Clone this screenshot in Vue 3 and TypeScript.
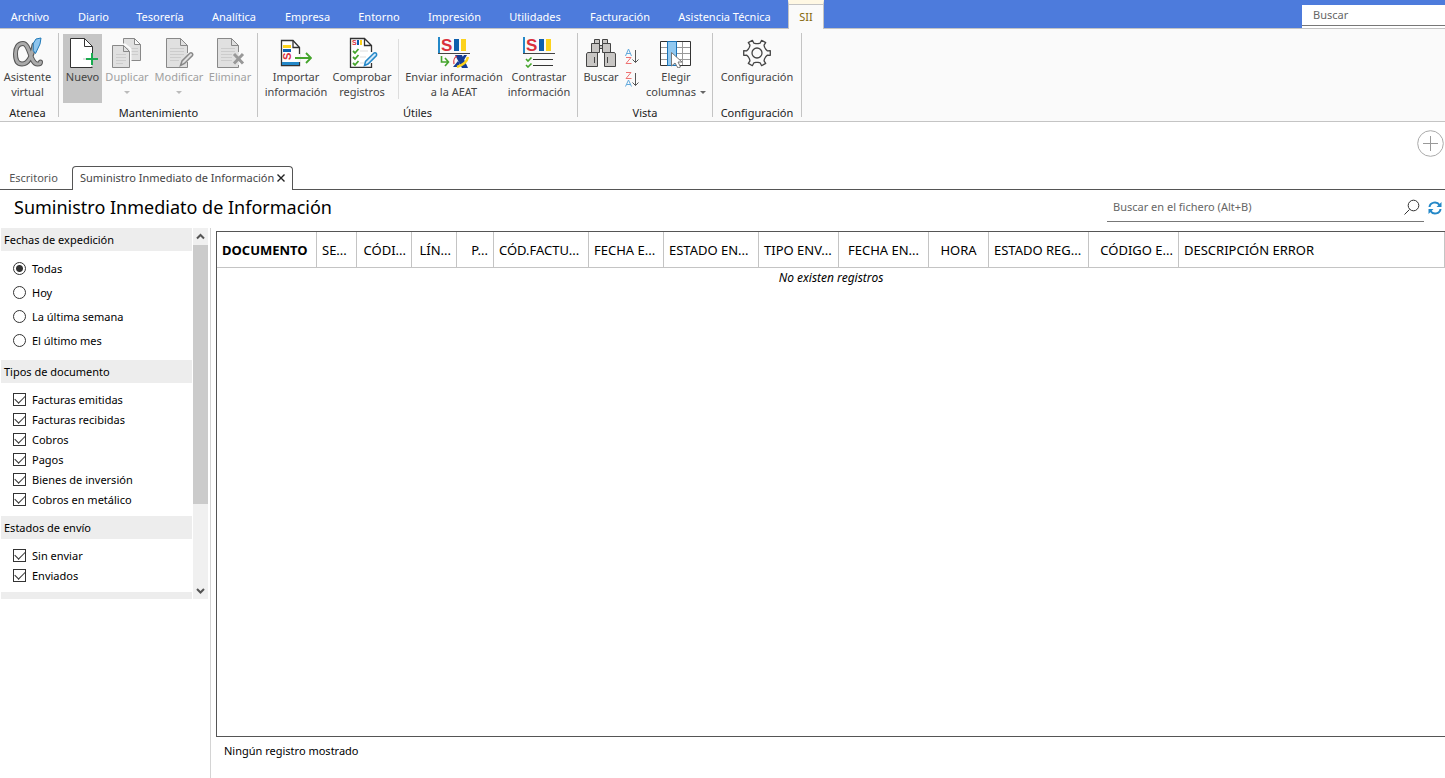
<script setup lang="ts">
import { ref } from 'vue'

interface MenuTab { label: string; width: number }
interface RibbonButton {
  icon: string
  lines: string[]
  width: number
  state?: 'active' | 'disabled'
  arrow?: 'below' | 'inline'
}
interface RibbonGroup { caption: string; left: number; right: number; buttons: RibbonButton[] }
interface Column { label: string; width?: number; align: 'left' | 'center' | 'right' }

const menuTabs: MenuTab[] = [
  { label: 'Archivo', width: 60 },
  { label: 'Diario', width: 67 },
  { label: 'Tesorería', width: 66 },
  { label: 'Analítica', width: 82 },
  { label: 'Empresa', width: 65 },
  { label: 'Entorno', width: 78 },
  { label: 'Impresión', width: 73 },
  { label: 'Utilidades', width: 88 },
  { label: 'Facturación', width: 82 },
  { label: 'Asistencia Técnica', width: 127 },
]

const groups: RibbonGroup[] = [
  {
    caption: 'Atenea', left: 0, right: 4,
    buttons: [{ icon: 'alpha', lines: ['Asistente', 'virtual'], width: 55 }],
  },
  {
    caption: 'Mantenimiento', left: 4, right: 4,
    buttons: [
      { icon: 'new', lines: ['Nuevo'], width: 39, state: 'active' },
      { icon: 'copy', lines: ['Duplicar'], width: 50, state: 'disabled', arrow: 'below' },
      { icon: 'edit', lines: ['Modificar'], width: 54, state: 'disabled', arrow: 'below' },
      { icon: 'remove', lines: ['Eliminar'], width: 48, state: 'disabled' },
    ],
  },
  {
    caption: 'Útiles', left: 5, right: 6,
    buttons: [
      { icon: 'import', lines: ['Importar', 'información'], width: 66 },
      { icon: 'check', lines: ['Comprobar', 'registros'], width: 66 },
      { icon: 'separator', lines: [], width: 7 },
      { icon: 'send', lines: ['Enviar información', 'a la AEAT'], width: 104 },
      { icon: 'contrast', lines: ['Contrastar', 'información'], width: 66 },
    ],
  },
  {
    caption: 'Vista', left: 4, right: 5,
    buttons: [
      { icon: 'find', lines: ['Buscar'], width: 38 },
      { icon: 'sort', lines: [], width: 24 },
      { icon: 'columns', lines: ['Elegir', 'columnas'], width: 64, arrow: 'inline' },
    ],
  },
  {
    caption: 'Configuración', left: 4, right: 5,
    buttons: [{ icon: 'gear', lines: ['Configuración'], width: 80 }],
  },
]

const gearPath = (() => {
  const points: string[] = []
  for (let tooth = 0; tooth < 6; tooth++) {
    const spec = [[-23, 9.5], [-12, 10.5], [-10, 13.5], [10, 13.5], [12, 10.5], [23, 9.5]]
    for (const [offset, radius] of spec) {
      const angle = ((tooth * 60 + offset) * Math.PI) / 180
      points.push(`${(16 + radius * Math.cos(angle)).toFixed(2)} ${(17 + radius * Math.sin(angle)).toFixed(2)}`)
    }
  }
  return `M${points.join('L')}Z`
})()

const periods = ['Todas', 'Hoy', 'La última semana', 'El último mes']
const period = ref('Todas')
const documentTypes = ['Facturas emitidas', 'Facturas recibidas', 'Cobros', 'Pagos', 'Bienes de inversión', 'Cobros en metálico']
const selectedTypes = ref([...documentTypes])
const sendStates = ['Sin enviar', 'Enviados']
const selectedStates = ref([...sendStates])

const columns: Column[] = [
  { label: 'DOCUMENTO', width: 100, align: 'left' },
  { label: 'SE...', width: 40, align: 'left' },
  { label: 'CÓDI...', width: 55, align: 'right' },
  { label: 'LÍN...', width: 45, align: 'right' },
  { label: 'P...', width: 37, align: 'right' },
  { label: 'CÓD.FACTU...', width: 95, align: 'left' },
  { label: 'FECHA E...', width: 75, align: 'left' },
  { label: 'ESTADO EN...', width: 95, align: 'left' },
  { label: 'TIPO ENV...', width: 80, align: 'left' },
  { label: 'FECHA EN...', width: 90, align: 'center' },
  { label: 'HORA', width: 60, align: 'center' },
  { label: 'ESTADO REG...', width: 100, align: 'left' },
  { label: 'CÓDIGO E...', width: 90, align: 'right' },
  { label: 'DESCRIPCIÓN ERROR', align: 'left' },
]
</script>

<template>
  <div class="app">
    <header>
      <nav class="menu">
        <button v-for="t in menuTabs" :key="t.label" type="button" class="menu-tab" :style="{ width: t.width + 'px' }">{{ t.label }}</button>
        <button type="button" class="menu-tab current">SII</button>
        <input class="menu-search" type="text" placeholder="Buscar" aria-label="Buscar" />
      </nav>

      <div class="ribbon">
        <section v-for="g in groups" :key="g.caption" class="group" :style="{ paddingLeft: g.left + 'px', paddingRight: g.right + 'px' }">
          <div class="group-buttons">
            <template v-for="b in g.buttons" :key="b.icon">
              <span v-if="b.icon === 'separator'" class="separator"></span>
              <div v-else-if="b.icon === 'sort'" class="sorts" :style="{ width: b.width + 'px' }">
                <button type="button" class="sort" aria-label="Orden ascendente">
                  <svg width="16" height="18" viewBox="0 0 16 18">
                    <path d="M1.500 8L4.500 1L7.500 8M2.500 5.500H6.500" fill="none" stroke="#62a9dc" />
                    <path d="M2 9.500H7L2 15.500H7.500" fill="none" stroke="#ee7272" />
                    <path d="M11.500 2V14.500M8.500 11.500L11.500 14.500L14.500 11.500" fill="none" stroke="#555" />
                  </svg>
                </button>
                <button type="button" class="sort" aria-label="Orden descendente">
                  <svg width="16" height="18" viewBox="0 0 16 18">
                    <path d="M2 1.500H7L2 7.500H7.500" fill="none" stroke="#ee7272" />
                    <path d="M1.500 15.500L4.500 9L7.500 15.500M2.500 13.500H6.500" fill="none" stroke="#62a9dc" />
                    <path d="M11.500 2V14.500M8.500 11.500L11.500 14.500L14.500 11.500" fill="none" stroke="#555" />
                  </svg>
                </button>
              </div>
              <button v-else type="button" class="tool" :class="b.state" :disabled="b.state === 'disabled'" :style="{ width: b.width + 'px' }">
                <svg v-if="b.icon === 'alpha'" width="32" height="32" viewBox="0 0 32 32" fill="none" stroke-linecap="round">
                  <path d="M22 9C20 20 17 28 10 28C5 28 3.500 23 3.500 18C3.500 12 6 7.500 11 7.500C18 7.500 18 28 25.500 28C27.500 28 28.500 27 28.500 26" stroke="#555" stroke-width="5" />
                  <path d="M22 9C20 20 17 28 10 28C5 28 3.500 23 3.500 18C3.500 12 6 7.500 11 7.500C18 7.500 18 28 25.500 28C27.500 28 28.500 27 28.500 26" stroke="#aaa" stroke-width="3" />
                  <path d="M21.500 7L24 3L29 2L28 8L23.500 17.500L21.500 15Z" fill="#8ec5ee" stroke="#1f79b8" />
                </svg>
                <svg v-else-if="b.icon === 'new'" width="32" height="32" viewBox="0 0 32 32" fill="none">
                  <path d="M20 31.500H3.500V2.500H17.500L25.500 10.500V19V31.500Z" fill="#fff" />
                  <path d="M25.500 16V32M16 23H31M24.500 30V32" stroke="#c5c5c5" stroke-width="1" />
                  <path d="M25.500 31.500H3.500V2.500H17.500L25.500 10.500V17M17.500 2.500V10.500H25.500" stroke="#333" />
                  <path d="M19 23H31M25 17V29" stroke="#1aab50" stroke-width="2" />
                </svg>
                <svg v-else-if="b.icon === 'copy'" width="32" height="32" viewBox="0 0 32 32" fill="#e0e0e0" stroke="#888">
                  <path d="M12.500 2.500H23.500L29.500 8.500V24.500H12.500ZM23.500 2.500V8.500H29.500" />
                  <path d="M16 12.500H27M16 15.500H27M16 18.500H27" stroke="#ccc" />
                  <path d="M0.500 8.500H14L19.500 13V32" stroke="#fafafa" stroke-width="2" fill="none" />
                  <path d="M1.500 9.500H12.500L18.500 15.500V31.500H1.500ZM12.500 9.500V15.500H18.500" />
                  <path d="M5 18.500H15M5 21.500H15M5 24.500H15M5 27.500H12" stroke="#ccc" />
                </svg>
                <svg v-else-if="b.icon === 'edit'" width="32" height="32" viewBox="0 0 32 32" fill="#e0e0e0" stroke="#888">
                  <path d="M3.500 31.500V2.500H17.500L24.500 9.500V31.500Z" stroke="none" />
                  <path d="M24.500 17V9.500L17.500 2.500H3.500V31.500H24.500V26M17.500 2.500V9.500H24.500" />
                  <path d="M7 12.500H21M7 15.500H21M7 18.500H21M7 21.500H18M7 24.500H16" stroke="#ccc" />
                  <path d="M17.500 29.500L19 25L27 17C28.500 16 30.500 18 29.500 19.500L21.500 27.500Z" stroke="#888" stroke-width="1.500" />
                </svg>
                <svg v-else-if="b.icon === 'remove'" width="32" height="32" viewBox="0 0 32 32" fill="#e0e0e0" stroke="#888">
                  <path d="M3.500 31.500V2.500H17.500L24.500 9.500V31.500Z" stroke="none" />
                  <path d="M24.500 16V9.500L17.500 2.500H3.500V31.500H24.500V29M17.500 2.500V9.500H24.500" />
                  <path d="M7 12.500H21M7 15.500H21M7 18.500H18M7 21.500H18M7 24.500H18" stroke="#ccc" />
                  <path d="M20 18L29 27.500M29 18L20 27.500" stroke="#999" stroke-width="3" />
                </svg>
                <svg v-else-if="b.icon === 'import'" width="32" height="32" viewBox="0 0 32 32" fill="none">
                  <path d="M1.500 4.500H13L19.500 11.500V29.500H1.500Z" fill="#fff" stroke="#333" stroke-width="1.300" />
                  <path d="M13 4.500V11.500H19.500" stroke="#333" stroke-width="1.300" />
                  <path d="M2 26H19V29H2Z" fill="#2488c8" />
                  <path d="M3 9H11V12H3Z" fill="#fcd21c" />
                  <path d="M3 13H11V16H3Z" fill="#0e60ad" />
                  <text transform="translate(11 24) rotate(-90)" class="logo-s medium">S</text>
                  <path d="M19 18V26" stroke="#fafafa" stroke-width="3" />
                  <path d="M15 22H31M26 17L31 22L26 27" stroke="#45a52c" stroke-width="1.800" />
                </svg>
                <svg v-else-if="b.icon === 'check'" width="32" height="32" viewBox="0 0 32 32" fill="none">
                  <path d="M4.500 2.500H18.500L25.500 9.500V31.500H4.500Z" fill="#fff" />
                  <path d="M25.500 16V9.500L18.500 2.500H4.500V31.500H25.500V27M18.500 2.500V9.500H25.500" stroke="#333" stroke-width="1.300" />
                  <text x="6" y="9" class="logo-s small">S</text>
                  <path d="M11 4H13V9H11Z" fill="#0e60ad" />
                  <path d="M14 4H16V9H14Z" fill="#fcd21c" />
                  <path d="M14 15H22M14 21H20M14 27H18" stroke="#ddd" />
                  <path d="M7 15L9 17L12.500 13M7 21L9 23L12.500 19M7 27L9 29L12.500 25" stroke="#45a52c" stroke-width="1.800" />
                  <path d="M18.500 29.500L19.500 25.500L28 17C30 16 31 18 30.500 19.500L22 28Z" fill="#d5eafa" stroke="#2488c8" stroke-width="1.500" />
                </svg>
                <svg v-else-if="b.icon === 'send'" width="32" height="32" viewBox="0 0 32 32" fill="none">
                  <path d="M1 1V17" stroke="#2488c8" stroke-width="2" />
                  <path d="M0 17.500H32" stroke="#444" />
                  <text x="3" y="15" class="logo-s">S</text>
                  <path d="M16 3H21V15H16Z" fill="#0e60ad" />
                  <path d="M23 3H28V15H23Z" fill="#fcd21c" />
                  <path d="M3.500 20V26H10M7 22L10.500 26L7 30" stroke="#45a52c" stroke-width="1.600" />
                  <path d="M17 19H24L30 32H24Z" fill="#143c94" />
                  <path d="M29 19L26 24L24 22L26 19ZM20 25L22 28L19 31H15Z" fill="#143c94" />
                  <path d="M16 28C15 24 17 21 19 20" stroke="#d9303c" stroke-width="1.200" />
                  <path d="M19 31C25 29 29 26 30 21" stroke="#fcd21c" stroke-width="2.400" />
                </svg>
                <svg v-else-if="b.icon === 'contrast'" width="32" height="32" viewBox="0 0 32 32" fill="none">
                  <path d="M1 1V17" stroke="#2488c8" stroke-width="2" />
                  <path d="M0 17.500H32" stroke="#444" />
                  <text x="3" y="15" class="logo-s">S</text>
                  <path d="M16 3H21V15H16Z" fill="#0e60ad" />
                  <path d="M23 3H28V15H23Z" fill="#fcd21c" />
                  <path d="M3 23L5 25L8.500 21.500M3 29L5 31L8.500 27.500" stroke="#45a52c" stroke-width="1.600" />
                  <path d="M10 23.500H30M10 29.500H30" stroke="#333" />
                </svg>
                <svg v-else-if="b.icon === 'find'" width="32" height="32" viewBox="0 0 32 32" fill="#c8c6c4" stroke="#444">
                  <path d="M9.500 3.500H14.500V7.500H9.500ZM17.500 3.500H22.500V7.500H17.500Z" />
                  <path d="M13.500 9.500H18.500V12.500H13.500Z" />
                  <path d="M6.500 7.500H14.500V16.500H6.500ZM17.500 7.500H25.500V16.500H17.500Z" />
                  <path d="M2.500 16.500H12.500V30.500H1.500V18ZM19.500 16.500H29.500L30.500 18V30.500H19.500Z" />
                  <path d="M9.500 21V27M22.500 21V27" />
                </svg>
                <svg v-else-if="b.icon === 'columns'" width="32" height="32" viewBox="0 0 32 32" fill="none">
                  <path d="M0.500 5.500H30.500V29.500H0.500Z" fill="#fff" />
                  <path d="M1 11.500H30M1 17.500H30M1 23.500H30M22.500 6V29" stroke="#999" />
                  <path d="M0.500 5.500H30.500V29.500H0.500Z" stroke="#333" />
                  <path d="M7.500 5.500H16.500V29.500H7.500Z" fill="#92c9f0" stroke="#1b74b8" />
                  <path d="M11.500 16.500V30L15 27L18 32L20.500 31L18 26H22Z" fill="#fff" stroke="#777" />
                </svg>
                <svg v-else width="32" height="32" viewBox="0 0 32 32" fill="none" stroke="#444" stroke-width="1.300">
                  <path :d="gearPath" stroke-linejoin="round" />
                  <circle cx="16" cy="17" r="5" />
                </svg>
                <span v-for="(line, i) in b.lines" :key="line" class="tool-line">{{ line }}<i v-if="b.arrow === 'inline' && i === 1" class="caret inline"></i></span>
                <i v-if="b.arrow === 'below'" class="caret"></i>
              </button>
            </template>
          </div>
          <h2 class="caption">{{ g.caption }}</h2>
        </section>
      </div>
    </header>

    <div class="quick">
      <button type="button" class="add" aria-label="Añadir">
        <svg width="28" height="28" viewBox="0 0 28 28" fill="none" stroke="#aaa">
          <circle cx="14.500" cy="14.500" r="12.800" />
          <path d="M7 14.500H22M14.500 7V22" stroke="#999" />
        </svg>
      </button>
    </div>

    <nav class="tabs">
      <button type="button" class="tab">Escritorio</button>
      <div class="tab open">
        <button type="button" class="tab-name">Suministro Inmediato de Información</button>
        <button type="button" class="close" aria-label="Cerrar">
          <svg width="8" height="8" viewBox="0 0 8 8"><path d="M0.500 0.500L7.500 7.500M7.500 0.500L0.500 7.500" stroke="#222" stroke-width="1.400" /></svg>
        </button>
      </div>
    </nav>

    <div class="heading">
      <h1>Suministro Inmediato de Información</h1>
      <label class="file-search">
        <input type="text" placeholder="Buscar en el fichero (Alt+B)" aria-label="Buscar en el fichero" />
        <svg width="16" height="16" viewBox="0 0 16 16" fill="none" stroke="#333"><circle cx="9.500" cy="6.500" r="5.300" /><path d="M5.500 10.500L0.500 15.500" /></svg>
      </label>
      <button type="button" class="refresh" aria-label="Actualizar">
        <svg width="14" height="14" viewBox="0 0 14 14" fill="none" stroke="#2488c8" stroke-width="2">
          <path d="M1.500 6C2 1 9 0 11.500 4M12.500 8C12 13 5 14 2.500 10" />
          <path d="M13.500 1V6H8.500ZM0.500 13V8H5.500Z" fill="#2488c8" stroke="none" />
        </svg>
      </button>
    </div>

    <main class="content">
      <aside class="side">
        <div class="filters">
          <div class="filter-list">
            <fieldset>
              <legend>Fechas de expedición</legend>
              <div class="radios">
                <label v-for="p in periods" :key="p"><input v-model="period" type="radio" name="period" :value="p" />{{ p }}</label>
              </div>
            </fieldset>
            <fieldset>
              <legend>Tipos de documento</legend>
              <div class="checks">
                <label v-for="d in documentTypes" :key="d"><input v-model="selectedTypes" type="checkbox" :value="d" />{{ d }}</label>
              </div>
            </fieldset>
            <fieldset>
              <legend>Estados de envío</legend>
              <div class="checks">
                <label v-for="s in sendStates" :key="s"><input v-model="selectedStates" type="checkbox" :value="s" />{{ s }}</label>
              </div>
            </fieldset>
            <div class="next-section"></div>
          </div>
          <div class="scrollbar">
            <svg width="15" height="17" viewBox="0 0 15 17"><path d="M4 10.500L7.500 7L11 10.500" fill="none" stroke="#555" stroke-width="2" /></svg>
            <div class="track"><div class="thumb"></div></div>
            <svg width="15" height="17" viewBox="0 0 15 17"><path d="M4 7L7.500 10.500L11 7" fill="none" stroke="#555" stroke-width="2" /></svg>
          </div>
        </div>
      </aside>

      <section class="records">
        <div class="grid">
          <table>
            <colgroup><col v-for="c in columns" :key="c.label" :style="c.width ? { width: c.width + 'px' } : {}" /></colgroup>
            <thead>
              <tr><th v-for="(c, i) in columns" :key="c.label" scope="col" :class="[c.align, { sorted: i === 0 }]">{{ c.label }}</th></tr>
            </thead>
            <tbody><tr><td :colspan="columns.length">No existen registros</td></tr></tbody>
          </table>
        </div>
        <footer>Ningún registro mostrado</footer>
      </section>
    </main>
  </div>
</template>

<style>
body { margin: 0; background: #fff; }
</style>

<style scoped>
* { box-sizing: border-box; }
.app {
  display: flex;
  flex-direction: column;
  min-height: 100vh;
  overflow: hidden;
  background: #fff;
  color: #000;
  font: 11px/15px "Noto Sans", "Open Sans", sans-serif;
}
button, input { font: inherit; color: inherit; }
button { padding: 0; border: 0; background: none; white-space: nowrap; }
svg { display: block; flex: none; }
h1, h2 { margin: 0; font-weight: 400; }

.menu { display: flex; height: 28px; background: #4d7bdc; }
.menu-tab { flex: none; padding-top: 5px; color: #fff; }
.menu-tab.current {
  width: 36px;
  height: 29px;
  border: 1px solid #c4c4c4;
  border-width: 0 1px;
  border-top: 4px solid #fff8e4;
  padding: 0 0 1px;
  background: linear-gradient(#c4c4c4, #c4c4c4) top / 100% 1px no-repeat #fafafa;
  color: #846608;
  z-index: 1;
}
.menu-search {
  width: 143px;
  height: 23px;
  margin: 5px 0 0 auto;
  padding: 0 11px 5px;
  border: 0;
  outline: 0;
  background: linear-gradient(#777, #777) 0 20px / 100% 1px no-repeat #fff;
}
input::placeholder { color: #666; opacity: 1; }

.ribbon {
  display: flex;
  height: 94px;
  border-top: 1px solid #c4c4c4;
  border-bottom: 1px solid #c4c4c4;
  background: #fafafa;
}
.group {
  padding-top: 5px;
  background: linear-gradient(#c4c4c4, #c4c4c4) right 4px / 1px 84px no-repeat;
}
.group-buttons { display: flex; height: 69px; }
.caption { margin-top: 3px; font-size: 11px; line-height: 14px; text-align: center; color: #222; }
.tool {
  display: flex;
  flex: none;
  flex-direction: column;
  align-items: center;
  padding-top: 2px;
  color: #444;
}
.tool svg { margin-bottom: 1px; }
.tool.active { background: #c5c5c5; }
.tool.disabled { color: #a0a0a0; }
.tool-line { display: flex; align-items: center; gap: 4px; line-height: 15px; }
.caret { margin-top: 7px; border: 3px solid transparent; border-top-color: #bbb; border-bottom: 0; }
.caret.inline { margin: 2px 0 0; border-top-color: #666; }
.separator { width: 1px; height: 60px; margin: 5px 3px; background: #ddd; }
.sorts { display: flex; flex-direction: column; align-items: center; gap: 5px; padding-top: 14px; }
.logo-s { font: bold 17px "Liberation Sans", sans-serif; fill: #d9303c; }
.logo-s.medium { font-size: 11px; }
.logo-s.small { font-size: 7px; }

.quick { display: flex; justify-content: flex-end; height: 44px; padding: 7px 1px 0 0; }
.add { height: 28px; }
.tabs { display: flex; height: 24px; background: linear-gradient(#555, #555) bottom / 100% 1px no-repeat; }
.tab { width: 67px; padding-bottom: 2px; color: #555; }
.tab.open {
  display: flex;
  align-items: center;
  gap: 3px;
  width: auto;
  margin-left: 5px;
  padding: 0 7px 2px;
  border: 1px solid #555;
  border-bottom: 0;
  border-radius: 4px 4px 0 0;
  background: #fff;
}
.tab-name { color: #444; }
.heading { display: flex; height: 38px; padding-right: 3px; }
h1 { margin-left: 14px; font-size: 18px; line-height: 35px; }
.file-search {
  display: flex;
  align-items: center;
  width: 317px;
  height: 32px;
  margin-left: auto;
  padding: 2px 4px 0 6px;
  border-bottom: 1px solid #777;
}
.file-search input { flex: 1; min-width: 0; padding: 0; border: 0; outline: 0; background: none; }
.refresh { margin: 0 0 2px 4px; }

.content { display: flex; flex: 1; }
.side { width: 211px; border-right: 1px solid #d4d4d4; }
.filters { display: flex; height: 371px; padding-left: 1px; overflow: hidden; }
.filter-list { flex: 1; overflow: hidden; }
fieldset { min-width: 0; margin: 0; padding: 0; border: 0; }
legend { display: block; width: 100%; height: 23px; padding: 0 3px; background: #ededed; line-height: 23px; }
.next-section { height: 23px; background: #ededed; }
.radios { padding: 5px 0 8px; }
.checks { padding: 6px 0 7px; }
fieldset label { display: flex; align-items: center; gap: 6px; height: 20px; padding-left: 12px; }
.radios label { height: 24px; }
fieldset input { appearance: none; flex: none; width: 13px; height: 13px; margin: 0; border: 1px solid #333; background: #fff; }
input[type="radio"] { border-radius: 50%; }
input[type="radio"]:checked { background: radial-gradient(circle, #333 3px, #fff 4px); }
input[type="checkbox"] { position: relative; }
input[type="checkbox"]:checked::after {
  content: "";
  position: absolute;
  left: 1px;
  top: 1px;
  width: 9px;
  height: 5px;
  border: solid #333;
  border-width: 0 0 1px 1px;
  transform: rotate(-45deg);
}
.scrollbar { display: flex; flex-direction: column; width: 15px; margin: 0 2px 0 1px; background: #f0f0f0; }
.track { flex: 1; }
.thumb { height: 77%; background: #cbcbcb; }

.records { display: flex; flex: 1; flex-direction: column; min-width: 0; padding: 3px 0 0 5px; }
.grid { flex: 1; border: 1px solid #555; border-right: 0; }
table { width: 100%; border-collapse: separate; border-spacing: 0; table-layout: fixed; }
th {
  height: 36px;
  padding: 1px 5px 0;
  border-right: 1px solid #c4c4c4;
  border-bottom: 1px solid #c4c4c4;
  overflow: hidden;
  font-size: 13px;
  font-weight: 400;
  white-space: nowrap;
}
th.sorted { font-weight: 700; }
.left { text-align: left; }
.center { text-align: center; }
.right { text-align: right; }
td { padding: 2px 0 0; font-size: 12px; font-style: italic; line-height: 16px; text-align: center; }
footer { height: 41px; padding: 5px 8px; line-height: 17px; }
</style>
